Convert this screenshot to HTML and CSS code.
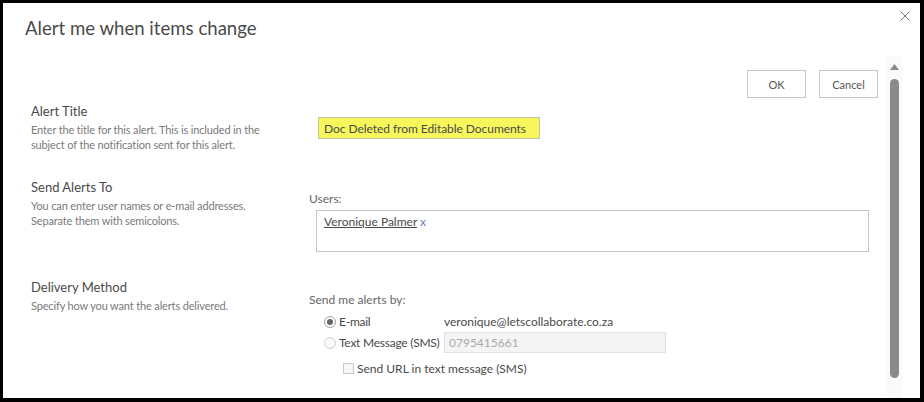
FILE: index.html
```html
<!DOCTYPE html>
<html lang="en">
<head>
    <meta charset="UTF-8">
    <meta name="viewport" content="width=device-width, initial-scale=1.0">
    <title>Alert me when items change</title>
    <link rel="stylesheet" href="styles.css">
</head>
<body>
    <div class="dialog">
        <header class="dialog-header">
            <h1 class="dialog-title">Alert me when items change</h1>
            <button class="close-btn" aria-label="Close">
                <svg width="10" height="10" viewBox="0 0 10 10">
                    <path d="M0.5 0.5 L9.5 9.5 M9.5 0.5 L0.5 9.5" stroke="#777" stroke-width="1" fill="none"/>
                </svg>
            </button>
        </header>

        <div class="dialog-body">
            <div class="content">
                <div class="toolbar">
                    <button class="btn">OK</button>
                    <button class="btn">Cancel</button>
                </div>

                <div class="sections">
                    <section class="section">
                        <div class="section-info">
                            <h3>Alert Title</h3>
                            <p>Enter the title for this alert. This is included in the<br>subject of the notification sent for this alert.</p>
                        </div>
                        <div class="section-field field-title">
                            <input type="text" class="title-input" value="Doc Deleted from Editable Documents">
                        </div>
                    </section>

                    <section class="section">
                        <div class="section-info">
                            <h3>Send Alerts To</h3>
                            <p>You can enter user names or e-mail addresses.<br>Separate them with semicolons.</p>
                        </div>
                        <div class="section-field field-users">
                            <div class="field-label">Users:</div>
                            <div class="people-box">
                                <span class="person">Veronique Palmer</span> <span class="remove">x</span>
                            </div>
                        </div>
                    </section>

                    <section class="section">
                        <div class="section-info">
                            <h3>Delivery Method</h3>
                            <p>Specify how you want the alerts delivered.</p>
                        </div>
                        <div class="section-field field-delivery">
                            <div class="field-label">Send me alerts by:</div>
                            <div class="options">
                                <label class="option"><span class="radio checked"></span>E-mail</label>
                                <span class="option-value">veronique@letscollaborate.co.za</span>
                                <label class="option"><span class="radio"></span>Text Message (SMS)</label>
                                <input type="text" class="phone-input" value="0795415661" disabled>
                            </div>
                            <label class="check-row"><span class="checkbox"></span>Send URL in text message (SMS)</label>
                        </div>
                    </section>
                </div>
            </div>

            <div class="scrollbar">
                <svg class="scroll-arrow" width="9" height="6" viewBox="0 0 9 6">
                    <path d="M4.5 0 L9 6 L0 6 Z" fill="#8a8a8a"/>
                </svg>
                <span class="scroll-thumb"></span>
            </div>
        </div>
    </div>
</body>
</html>
```

FILE: styles.css
```css
* {
    margin: 0;
    padding: 0;
    box-sizing: border-box;
    font-family: 'Lato', 'Open Sans', sans-serif;
}

body {
    background: #000;
    padding: 3px 4px 4px 3px;
    height: 402px;
    overflow: hidden;
}

.dialog {
    background: #fff;
    height: 395px;
    display: flex;
    flex-direction: column;
}

.dialog-header {
    display: flex;
    justify-content: space-between;
    align-items: flex-start;
    height: 53px;
    padding: 8px 10px 0 22px;
}

.dialog-title {
    margin-top: 5px;
    font-size: 18.6px;
    line-height: 24px;
    font-weight: 400;
    color: #4a4a4a;
}

.close-btn {
    width: 10px;
    height: 10px;
    border: none;
    background: none;
    display: flex;
    cursor: pointer;
}

.dialog-body {
    flex: 1;
    display: flex;
    min-height: 0;
}

.content {
    flex: 1;
    padding-left: 28px;
}

.toolbar {
    display: flex;
    justify-content: flex-end;
    gap: 13px;
    padding: 14px 9px 0 0;
}

.btn {
    width: 59px;
    height: 28px;
    border: 1px solid #c6c6c6;
    background: #fff;
    color: #555;
    font-size: 11px;
    cursor: pointer;
}

.sections {
    display: flex;
    flex-direction: column;
    gap: 27px;
    margin-top: 5px;
}

.section {
    display: grid;
    grid-template-columns: 278px 1fr;
}

.section-info h3 {
    font-size: 13px;
    line-height: 16px;
    font-weight: 400;
    color: #4a4a4a;
}

.section-info p {
    margin-top: 3px;
    font-size: 11px;
    line-height: 15px;
    letter-spacing: -0.15px;
    color: #7a7a7a;
}

.field-title {
    padding-top: 14px;
}

.title-input {
    display: block;
    margin-left: 9px;
    width: 222px;
    height: 22px;
    padding: 0 5px;
    background: #f7f75c;
    border: 1px solid #c4c4a8;
    color: #4a4a4a;
    font-size: 12px;
    letter-spacing: -0.05px;
    outline: none;
}

.field-users {
    padding-top: 12px;
}

.field-label {
    font-size: 12px;
    line-height: 16px;
    color: #666;
}

.people-box {
    margin: 3px 0 0 7px;
    width: 553px;
    height: 42px;
    padding: 3px 7px;
    border: 1px solid #c6c6c6;
    font-size: 12px;
    line-height: 16px;
}

.person {
    color: #4a4a4a;
    text-decoration: underline;
}

.remove {
    color: #6f78b4;
}

.field-delivery {
    padding-top: 13px;
}

.options {
    display: grid;
    grid-template-columns: 120px 222px;
    grid-auto-rows: 21px;
    align-items: center;
    margin: 3px 0 0 15px;
    font-size: 12px;
    color: #4a4a4a;
}

.option {
    display: flex;
    align-items: center;
    gap: 3px;
    white-space: nowrap;
    letter-spacing: -0.25px;
}

.radio {
    width: 12px;
    height: 12px;
    border-radius: 50%;
    border: 1px solid #cfcfcf;
    background: #fafafa;
    display: flex;
    align-items: center;
    justify-content: center;
}

.radio.checked {
    border-color: #a0a0a0;
    background: #fff;
}

.radio.checked::after {
    content: "";
    width: 6px;
    height: 6px;
    border-radius: 50%;
    background: #666;
}

.option-value {
    color: #4a4a4a;
}

.phone-input {
    width: 222px;
    height: 21px;
    padding: 0 4px;
    background: #f4f4f4;
    border: 1px solid #e1e1e1;
    color: #aaa;
    font-size: 12px;
}

.check-row {
    display: flex;
    align-items: center;
    gap: 3px;
    height: 22px;
    margin: 4px 0 0 34px;
    font-size: 12px;
    color: #4a4a4a;
}

.checkbox {
    width: 11px;
    height: 11px;
    border: 1px solid #c8c8c8;
    background: #f6f6f6;
}

.scrollbar {
    width: 15px;
    margin-right: 18px;
    background: #fafafa;
    display: flex;
    flex-direction: column;
    align-items: center;
    padding-top: 8px;
}

.scroll-arrow {
    display: block;
}

.scroll-thumb {
    margin-top: 9px;
    width: 9px;
    height: 299px;
    border-radius: 5px;
    background: #8a8a8a;
}
```
